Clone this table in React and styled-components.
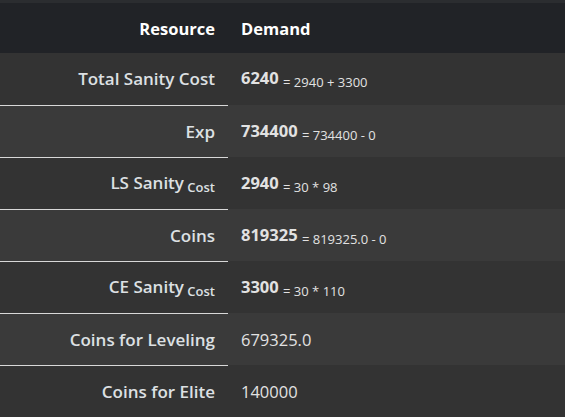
import styled, { createGlobalStyle } from 'styled-components'

const GlobalStyle = createGlobalStyle`
  body {
    margin: 0;
    background-color: #2b2d30;
    font-family: 'Open Sans', 'Liberation Sans', sans-serif;
    color: #e2e2e2;
  }
`

const rows = [
  { label: 'Total Sanity Cost', value: '6240', note: '= 2940 + 3300' },
  { label: 'Exp', value: '734400', note: '= 734400 - 0' },
  { label: 'LS Sanity', sub: 'Cost', value: '2940', note: '= 30 * 98' },
  { label: 'Coins', value: '819325', note: '= 819325.0 - 0' },
  { label: 'CE Sanity', sub: 'Cost', value: '3300', note: '= 30 * 110' },
  { label: 'Coins for Leveling', value: '679325.0', plain: true },
  { label: 'Coins for Elite', value: '140000', plain: true },
]

export default function App() {
  return (
    <>
      <GlobalStyle />
      <Wrapper>
        <Table>
          <thead>
            <tr>
              <HeadCell align="right">Resource</HeadCell>
              <HeadCell align="left">Demand</HeadCell>
            </tr>
          </thead>
          <tbody>
            {rows.map((row, i) => (
              <Row key={row.label} odd={i % 2 === 1}>
                <LabelCell>
                  {row.label}
                  {row.sub && <Sub> {row.sub}</Sub>}
                </LabelCell>
                <ValueCell>
                  {row.plain ? (
                    <Plain>{row.value}</Plain>
                  ) : (
                    <>
                      <Value>{row.value}</Value> <Note>{row.note}</Note>
                    </>
                  )}
                </ValueCell>
              </Row>
            ))}
          </tbody>
        </Table>
      </Wrapper>
    </>
  )
}

const Wrapper = styled.div`
  padding-top: 3px;
`

const Table = styled.table`
  width: 100%;
  border-collapse: collapse;
  border-spacing: 0;
`

const HeadCell = styled.th`
  height: 50px;
  padding: 0 13px;
  background-color: #212327;
  color: #ffffff;
  font-size: 16.5px;
  font-weight: 700;
  text-align: ${({ align }) => align};
  width: ${({ align }) => (align === 'right' ? '202px' : 'auto')};
`

const Row = styled.tr`
  height: 52px;
  background-color: ${({ odd }) => (odd ? '#3a3a3a' : '#333333')};
`

const LabelCell = styled.td`
  padding: 0 13px 0 0;
  width: 215px;
  text-align: right;
  font-size: 17px;
  font-weight: 600;
  color: #dde0e3;
  border-bottom: 1px solid #d8d8d8;
`

const Sub = styled.sub`
  font-size: 13px;
  vertical-align: -3px;
`

const ValueCell = styled.td`
  padding: 0 13px;
  font-size: 16.5px;
  color: #e2e2e2;
  border-bottom: 1px solid transparent;
`

const Value = styled.span`
  font-weight: 700;
`

const Note = styled.span`
  font-size: 13px;
  vertical-align: -3px;
`

const Plain = styled.span`
  font-weight: 400;
`
